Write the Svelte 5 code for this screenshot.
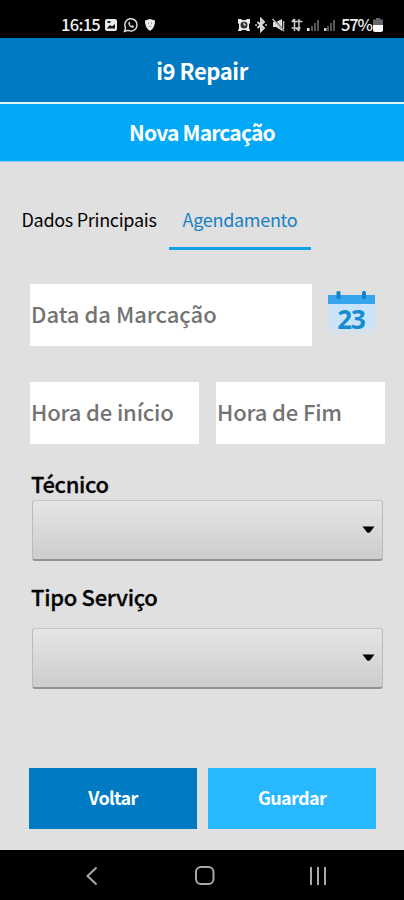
<script lang="ts">
  let tabs = ['Dados Principais', 'Agendamento'];
  let activeTab = $state('Agendamento');
  let date = $state('');
  let start = $state('');
  let end = $state('');
</script>

<div class="screen">
  <div class="status">
    <span class="clock">16:15</span>
    <svg class="left-icons" width="54" height="16" viewBox="0 0 54 16">
      <rect x="2" y="2" width="12" height="12" rx="2" fill="#e8e8e8" />
      <path d="M4 11l3-3 2 1.500 3-2.500v4.500H4z" fill="#111" />
      <rect x="4.500" y="4" width="3" height="2" fill="#222" />
      <path d="M21.500 14.500l1-3.600a6.200 6.200 0 1 1 2.600 2.500z" fill="none" stroke="#ddd" stroke-width="1.500" />
      <path d="M25.500 5.500c-1 2.500 2.500 6 5 5l.5-1.500-1.700-.8-1 .8-1.700-1.800.8-1-.7-1.500z" fill="#ddd" />
      <path d="M42 3.500l5-1.500 5 1.500c0 5-1.500 8-5 10.500-3.500-2.500-5-5.500-5-10.500z" fill="#eee" />
      <path d="M45.500 5v2.500M48.500 5v2.500M45.500 9.500h3" stroke="#aaa" stroke-width="1" />
    </svg>
    <svg class="right-icons" width="101" height="16" viewBox="0 0 101 16">
      <path d="M1 2h3l1 1h4l1-1h3v4l-1 1v4l1 3h-3l-1-1H5l-1 1H1l1-3V7L1 6z" fill="#eee" />
      <circle cx="7" cy="8" r="3.500" fill="#333" />
      <path d="M7 5.500V8h2" fill="none" stroke="#fff" />
      <path d="M20.500 5l6.500 6-3 3V2l3 3-6.500 6" fill="none" stroke="#ddd" stroke-width="1.900" />
      <path d="M19 8h.1M29 8h.1" stroke="#bbb" stroke-width="2" stroke-linecap="round" />
      <path d="M36 5h3l6-3v12l-6-4h-3z" fill="#ddd" />
      <path d="M36.500 2l10.500 12" stroke="#000" stroke-width="1.500" />
      <path d="M35.500 2l11.500 12M46.500 4v8" stroke="#bbb" stroke-width="1.500" />
      <path d="M57.500 2v12M62 2v12M54.500 4.500h11M54.500 11h9M55 4.500l2.500-2.500M59.500 11.500L62 14" stroke="#ccc" stroke-width="1.500" fill="none" />
      <path d="M70 12.500h2.500" stroke="#eee" stroke-width="3" />
      <path d="M75 14V9M78 14V6M81 14V3" stroke="#555" stroke-width="2" />
      <path d="M87 12.500h2.500" stroke="#ccc" stroke-width="3" />
      <path d="M91 14V9M94 14V6M97 14V3" stroke="#555" stroke-width="2" />
    </svg>
    <span class="battery">57%</span>
    <svg class="cell" width="10" height="14" viewBox="0 0 10 14">
      <path d="M3 0h4v1.500h3V7H0V1.500h3z" fill="#666" />
      <path d="M0 7h10v5a2 2 0 0 1-2 2H2a2 2 0 0 1-2-2z" fill="#fff" />
    </svg>
  </div>

  <header class="app-bar"><span>i9 Repair</span></header>
  <div class="title-bar"><span>Nova Marcação</span></div>

  <main>
    <nav class="tabs">
      {#each tabs as tab}
        <button class="tab" class:active={tab === activeTab} onclick={() => (activeTab = tab)}>
          {tab}
        </button>
      {/each}
    </nav>

    <div class="date-row">
      <input class="date" placeholder="Data da Marcação" bind:value={date} />
      <svg class="calendar" width="48" height="48" viewBox="0 0 48 48">
        <defs>
          <linearGradient id="page" x1="0" y1="0" x2="0" y2="1">
            <stop offset="0.6" stop-color="#c9e3f8" />
            <stop offset="1" stop-color="#dbe1e6" />
          </linearGradient>
        </defs>
        <path d="M1 13h46v32H1z" fill="url(#page)" />
        <path d="M0 5h47v9H0z" fill="#36a5ed" />
        <rect x="8.500" y="1" width="4" height="8" rx="1.500" fill="#1583cb" />
        <rect x="34" y="1" width="4" height="8" rx="1.500" fill="#1583cb" />
        <text x="23" y="39" text-anchor="middle">23</text>
      </svg>
    </div>

    <div class="time-row">
      <input class="start" placeholder="Hora de início" bind:value={start} />
      <input class="end" placeholder="Hora de Fim" bind:value={end} />
    </div>

    <div class="label tecnico">Técnico</div>
    <button class="select" aria-label="Técnico">
      <svg width="13" height="8" viewBox="0 0 13 8"><path d="M.5.5h12L8 6.200q-1.500 1.300-3 0z" /></svg>
    </button>

    <div class="label tipo">Tipo Serviço</div>
    <button class="select" aria-label="Tipo Serviço">
      <svg width="13" height="8" viewBox="0 0 13 8"><path d="M.5.5h12L8 6.200q-1.500 1.300-3 0z" /></svg>
    </button>

    <div class="actions">
      <button class="back">Voltar</button>
      <button class="save">Guardar</button>
    </div>
  </main>

  <div class="android-nav">
    <svg width="404" height="50" viewBox="0 0 404 50" fill="none" stroke="#a9a9a9" stroke-width="2">
      <path d="M96.500 17.500L87.500 26l9 8.500" />
      <rect x="196" y="17" width="17.500" height="17" rx="5" />
      <path d="M311 17v18M318 17v18M325 17v18" />
    </svg>
  </div>
</div>

<style>
  :global(body) {
    margin: 0;
    background: #e0e0e0;
  }

  .screen {
    width: 404px;
    height: 900px;
    display: flex;
    flex-direction: column;
    overflow: hidden;
    background: #e0e0e0;
    color: #050505;
    font-family: 'Noto Sans CJK JP', 'Noto Sans', sans-serif;
  }

  button,
  input {
    box-sizing: border-box;
    margin: 0;
    padding: 0;
    border: 0;
    border-radius: 0;
    font: inherit;
    color: inherit;
  }

  .status {
    height: 38px;
    display: flex;
    align-items: center;
    padding: 12px 21px 0 61px;
    box-sizing: border-box;
    background: #000;
    color: #eee;
    font-size: 16.5px;
    font-weight: 500;
    line-height: 20px;
  }

  .status span {
    padding-bottom: 2px;
    white-space: nowrap;
  }

  .clock {
    width: 42px;
    letter-spacing: -0.7px;
  }

  .right-icons {
    margin-left: auto;
  }

  .battery {
    width: 32px;
    margin-left: 3px;
    letter-spacing: -1.1px;
  }

  .app-bar,
  .title-bar {
    display: flex;
    justify-content: center;
    align-items: center;
    box-sizing: border-box;
    color: #fff;
    font-weight: 700;
    line-height: 30px;
  }

  .app-bar {
    height: 66px;
    background: #007bc3;
    border-bottom: 2px solid #e0f1fb;
    font-size: 22px;
    letter-spacing: -0.4px;
  }

  .title-bar {
    height: 58px;
    padding-bottom: 2px;
    background: #02a9f7;
    border-bottom: 1px solid #8fcdf0;
    font-size: 21px;
    letter-spacing: -0.8px;
  }

  main {
    flex: 1;
  }

  .tabs {
    display: flex;
    height: 88px;
    padding-left: 9px;
    align-items: flex-end;
    box-sizing: border-box;
  }

  .tab {
    width: 160px;
    height: 60px;
    background: none;
    font-size: 18px;
    line-height: 24px;
    letter-spacing: -0.3px;
    border-bottom: 3px solid transparent;
    white-space: nowrap;
  }

  .tab.active {
    width: 142px;
    color: #1880c6;
    border-color: #149fe6;
  }

  .date-row {
    display: flex;
    gap: 16px;
    padding: 34px 0 0 30px;
  }

  input {
    height: 62px;
    padding: 0 0 4px 1px;
    background: #fff;
    font-size: 22px;
    font-weight: 500;
    letter-spacing: -0.15px;
  }

  input::placeholder {
    color: #737373;
    opacity: 1;
  }

  .date {
    width: 282px;
    letter-spacing: 0;
  }

  .calendar {
    margin-top: 6px;
  }

  .calendar text {
    fill: #178bd0;
    font-size: 26px;
    font-weight: 700;
    font-family: 'Noto Sans', sans-serif;
    letter-spacing: -1px;
  }

  .time-row {
    display: flex;
    gap: 17px;
    padding: 36px 0 0 30px;
  }

  .start,
  .end {
    width: 169px;
  }

  .label {
    padding-left: 31px;
    font-size: 22px;
    font-weight: 500;
    line-height: 30px;
    letter-spacing: -0.3px;
    -webkit-text-stroke: 0.3px #050505;
  }

  .tecnico {
    margin-top: 24px;
    padding-bottom: 2px;
  }

  .tipo {
    margin: 20px 0 15px;
    padding-bottom: 2px;
  }

  .select {
    display: flex;
    align-items: center;
    justify-content: flex-end;
    width: 351px;
    height: 61px;
    margin-left: 32px;
    padding-right: 7px;
    border: 1px solid #bbb;
    border-top-color: #c6c6c6;
    border-bottom: 2px solid #929292;
    border-radius: 3px;
    background: linear-gradient(#e5e5e5, #cdcdcd);
  }

  .actions {
    display: flex;
    gap: 11px;
    padding: 79px 0 0 29px;
  }

  .actions button {
    width: 168px;
    height: 61px;
    padding-bottom: 3px;
    color: #fff;
    font-size: 18px;
    font-weight: 700;
    letter-spacing: -0.65px;
  }

  .actions .back {
    background: #007bc3;
  }

  .actions .save {
    background: #27b8ff;
  }

  .android-nav {
    height: 50px;
    background: #000;
  }

  .android-nav svg {
    display: block;
  }
</style>
